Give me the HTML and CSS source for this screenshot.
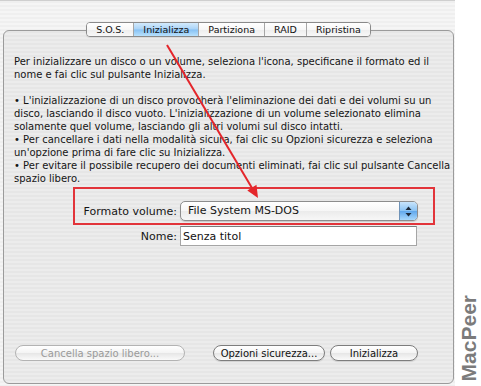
FILE: index.html
```html
<!DOCTYPE html>
<html lang="it">
<head>
  <meta charset="UTF-8" />
  <title>Utility Disco | Inizializza</title>
  <link rel="stylesheet" href="styles.css">
</head>
<body>
  <div class="window">
    <main class="pane">
      <section class="tabbox">
        <nav class="tabs">
          <button class="tab">S.O.S.</button>
          <button class="tab active">Inizializza</button>
          <button class="tab">Partiziona</button>
          <button class="tab">RAID</button>
          <button class="tab">Ripristina</button>
        </nav>

        <div class="help">
          <p>Per inizializzare un disco o un volume, seleziona l'icona, specificane il formato ed il<br>nome e fai clic sul pulsante Inizializza.</p>
          <div class="notes">
            <p>• L'inizializzazione di un disco provocherà l'eliminazione dei dati e dei volumi su un<br>disco, lasciando il disco vuoto. L'inizializzazione di un volume selezionato elimina<br>solamente quel volume, lasciando gli altri volumi sul disco intatti.</p>
            <p>• Per cancellare i dati nella modalità sicura, fai clic su Opzioni sicurezza e seleziona<br>un'opzione prima di fare clic su Inizializza.</p>
            <p>• Per evitare il possibile recupero dei documenti eliminati, fai clic sul pulsante Cancella<br>spazio libero.</p>
          </div>
        </div>

        <div class="callout">
          <div class="row">
            <label class="row-label" for="formatSelect">Formato volume:</label>
            <div class="popup" id="formatSelect">
              <span class="popup-value">File System MS-DOS</span>
              <span class="popup-arrows">
                <svg width="7" height="11" viewBox="0 0 7 11">
                  <path d="M3.5 0.5 L6.5 4 L0.5 4 Z" fill="#1d2a3a"/>
                  <path d="M3.5 10.5 L6.5 7 L0.5 7 Z" fill="#1d2a3a"/>
                </svg>
              </span>
            </div>
          </div>
        </div>

        <div class="row name-row">
          <label class="row-label" for="nameInput">Nome:</label>
          <input class="field" id="nameInput" type="text" value="Senza titol">
        </div>

        <div class="actions">
          <button class="btn btn-erase" disabled>Cancella spazio libero...</button>
          <button class="btn btn-opts">Opzioni sicurezza...</button>
          <button class="btn btn-init">Inizializza</button>
        </div>
      </section>
    </main>
    <aside class="brand"><span>MacPeer</span></aside>
  </div>

  <svg class="arrow" width="481" height="386" viewBox="0 0 481 386">
    <line x1="167" y1="45" x2="252" y2="188" stroke="#e4262b" stroke-width="2"/>
    <polygon points="258,198 256.5,184.8 247.3,190.4" fill="#e4262b"/>
  </svg>
</body>
</html>
```

FILE: styles.css
```css
* {
  box-sizing: border-box;
}

body {
  margin: 0;
  width: 481px;
  height: 386px;
  overflow: hidden;
  font-family: 'DejaVu Sans', sans-serif;
  color: #151515;
  background: #fff;
}

.window {
  display: flex;
  height: 386px;
}

.pane {
  width: 455px;
  padding: 30px 1px 0 3px;
  border-top: 1px solid #cfcfcf;
  background: repeating-linear-gradient(#efefef 0, #efefef 2px, #f5f5f5 2px, #f5f5f5 4px);
}

.tabbox {
  display: flex;
  flex-direction: column;
  height: 354px;
  margin-top: -1px;
  border: 1px solid #9b9b9b;
  border-radius: 6px;
  background: repeating-linear-gradient(#e6e6e6 0, #e6e6e6 2px, #ececec 2px, #ececec 4px);
}

.tabs {
  display: flex;
  align-self: center;
  margin-top: -9px;
  height: 15px;
  border: 1px solid #8a8a8a;
  border-radius: 4px;
  overflow: hidden;
  box-shadow: 0 1px 1px rgba(0, 0, 0, 0.08);
}

.tab {
  padding: 0 9px;
  border: none;
  border-left: 1px solid #a6a6a6;
  font-family: inherit;
  font-size: 9.5px;
  line-height: 13px;
  color: #111;
  background: linear-gradient(#ffffff 0%, #f7f7f7 50%, #ededed 51%, #f8f8f8 100%);
}

.tab:first-child {
  border-left: none;
}

.tab.active {
  background: linear-gradient(#d3eafc 0%, #a9d3f7 48%, #86c1f3 52%, #b8e1fd 100%);
}

.help {
  margin-top: 18px;
  padding: 0 0 0 10px;
  font-size: 10px;
  line-height: 13px;
}

.help p {
  margin: 0;
  white-space: nowrap;
}

.notes {
  margin-top: 13px;
}

.callout {
  margin: 2px 0 0 69px;
  width: 362px;
  padding: 12px 0 2px;
  border: 2px solid #e2343a;
}

.row {
  display: flex;
  align-items: center;
  gap: 3px;
  height: 20px;
  font-size: 11px;
}

.row-label {
  text-align: right;
}

.callout .row-label {
  width: 102px;
}

.name-row {
  margin-top: 1px;
}

.name-row .row-label {
  width: 173px;
}

.popup {
  display: flex;
  width: 238px;
  height: 20px;
  border: 1px solid #8d8d8d;
  border-radius: 5px;
  overflow: hidden;
  background: linear-gradient(#ffffff, #f6f6f6 50%, #ebebeb 51%, #f7f7f7);
  box-shadow: 0 1px 1px rgba(0, 0, 0, 0.15);
}

.popup-value {
  flex: 1;
  padding-left: 7px;
  line-height: 18px;
}

.popup-arrows {
  display: flex;
  align-items: center;
  justify-content: center;
  width: 18px;
  border-left: 1px solid #6f93b8;
  background: linear-gradient(#c8e4fb 0%, #8cc4f4 48%, #62a8ec 52%, #a8d8fc 100%);
}

.field {
  width: 237px;
  height: 20px;
  padding: 0 0 0 2px;
  border: 1px solid #a5a5a5;
  border-top-color: #7b7b7b;
  font-family: inherit;
  font-size: 11px;
  color: #111;
  background: #fff;
}

.actions {
  display: flex;
  gap: 5px;
  margin-top: auto;
  padding: 0 0 22px 11px;
}

.btn {
  height: 16px;
  padding: 0;
  border: 1px solid #7d7d7d;
  border-radius: 8px;
  font-family: inherit;
  font-size: 10px;
  color: #111;
  background: linear-gradient(#ffffff 0%, #f4f4f4 50%, #e6e6e6 51%, #fafafa 100%);
  box-shadow: 0 1px 1px rgba(0, 0, 0, 0.12);
}

.btn:disabled {
  border-color: #b3b3b3;
  color: #9a9a9a;
  box-shadow: none;
}

.btn-erase {
  width: 170px;
}

.btn-opts {
  width: 112px;
  margin-left: 23px;
}

.btn-init {
  width: 88px;
}

.brand {
  display: flex;
  flex-direction: column;
  justify-content: flex-end;
  align-items: center;
  width: 26px;
  padding-bottom: 5px;
  background: #fff;
}

.brand span {
  writing-mode: vertical-rl;
  transform: rotate(180deg);
  font-family: 'Liberation Sans', Arial, sans-serif;
  font-weight: bold;
  font-size: 21px;
  line-height: 21px;
  color: #7b7b7b;
}

.arrow {
  position: absolute;
  top: 0;
  left: 0;
  pointer-events: none;
}
```
